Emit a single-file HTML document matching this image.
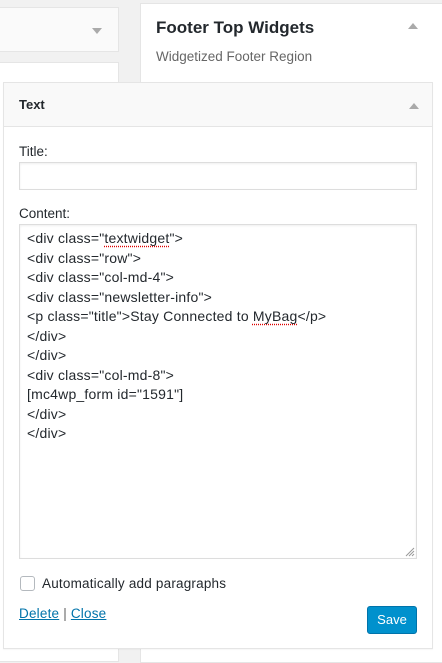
<!DOCTYPE html>
<html><head><style>
*{box-sizing:border-box;margin:0;padding:0}
body{width:442px;height:653px;background:#f1f1f1;position:relative;overflow:hidden;font-family:"Liberation Sans",sans-serif;color:#23282d}
.abs{position:absolute}
.tri{position:absolute;width:0;height:0;border-left:5px solid transparent;border-right:5px solid transparent}
.ta div{height:19.5px;font-size:14px;letter-spacing:0.2px;line-height:19.5px;white-space:pre}
.sq{text-decoration:underline dotted #d00;text-underline-offset:3px}
</style></head><body>
<div class="abs" style="left:-1px;top:7px;width:120px;height:45px;background:#fafafa;border:1px solid #e5e5e5"></div>
<div class="tri" style="left:92px;top:28px;border-top:6px solid #aaa"></div>
<div class="abs" style="left:-1px;top:62px;width:120px;height:600px;background:#fff;border:1px solid #e5e5e5"></div>
<div class="abs" style="left:140px;top:3px;width:310px;height:660px;background:#fff;border:1px solid #e5e5e5"></div>
<div class="abs" style="left:156px;top:18px;font-size:17px;font-weight:bold;color:#23282d">Footer Top Widgets</div>
<div class="abs" style="left:156px;top:49px;font-size:13.5px;color:#666">Widgetized Footer Region</div>
<div class="tri" style="left:408px;top:23px;border-bottom:6px solid #aaa"></div>

<div class="abs" style="left:3px;top:82px;width:430px;height:567px;background:#fff;border:1px solid #e5e5e5;box-shadow:0 1px 1px rgba(0,0,0,.04)">
 <div style="height:44px;background:#f9f9f9;border-bottom:1px solid #e5e5e5;padding:14px 0 0 15px;font-size:13px;font-weight:bold">Text</div>
 <div class="tri" style="left:405px;top:20px;border-bottom:6px solid #aaa"></div>
</div>
<div class="abs" style="left:19px;top:144px;font-size:13.5px">Title:</div>
<div class="abs" style="left:19px;top:162px;width:398px;height:28px;border:1px solid #ddd;box-shadow:inset 0 1px 2px rgba(0,0,0,.07)"></div>
<div class="abs" style="left:19px;top:206px;font-size:13.5px">Content:</div>
<div class="abs ta" style="left:19px;top:224px;width:398px;height:335px;border:1px solid #ddd;padding:4px 0 0 7px;box-shadow:inset 0 1px 2px rgba(0,0,0,.07)">
<div>&lt;div class="<span class="sq">textwidget</span>"&gt;</div>
<div>&lt;div class="row"&gt;</div>
<div>&lt;div class="col-md-4"&gt;</div>
<div>&lt;div class="newsletter-info"&gt;</div>
<div>&lt;p class="title"&gt;Stay Connected to <span class="sq">MyBag</span>&lt;/p&gt;</div>
<div>&lt;/div&gt;</div>
<div>&lt;/div&gt;</div>
<div>&lt;div class="col-md-8"&gt;</div>
<div>[mc4wp_form id="1591"]</div>
<div>&lt;/div&gt;</div>
<div>&lt;/div&gt;</div>
</div>
<svg class="abs" style="left:405px;top:547px" width="10" height="10"><path d="M1 9L9 1M4 9L9 4M7 9L9 7" stroke="#999" stroke-width="1"/></svg>
<div class="abs" style="left:20px;top:576px;width:15px;height:15px;border:1px solid #b4b9be;border-radius:3px;background:#fff"></div>
<div class="abs" style="left:42px;top:576px;font-size:13.5px;letter-spacing:0.2px">Automatically add paragraphs</div>
<div class="abs" style="left:19px;top:606px;font-size:13.5px;letter-spacing:0.2px;color:#0073aa"><span style="text-decoration:underline">Delete</span> <span style="color:#666">|</span> <span style="text-decoration:underline">Close</span></div>
<div class="abs" style="left:367px;top:606px;width:50px;height:28px;background:#0091cd;border:1px solid #0073aa;border-radius:3px;color:#fff;font-size:13px;text-align:center;line-height:26px">Save</div>
</body></html>
